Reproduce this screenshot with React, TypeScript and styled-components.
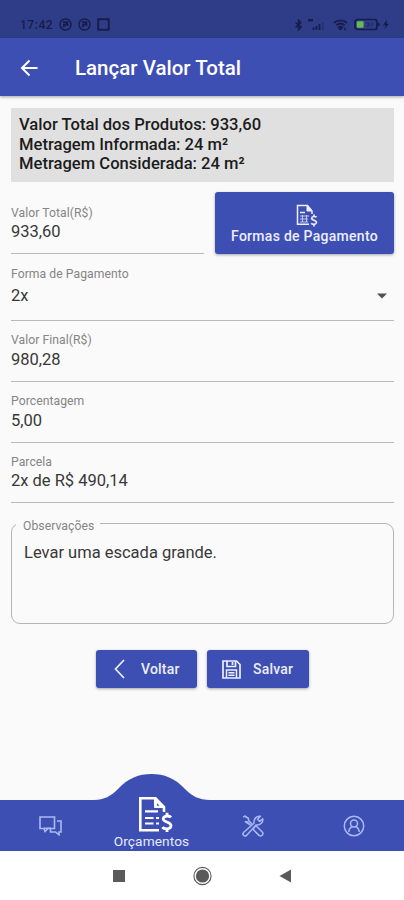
import React from "react";
import styled, { createGlobalStyle } from "styled-components";

const BLUE = "#3e4fb4";

const GlobalStyle = createGlobalStyle`
  * { box-sizing: border-box; }
  body { margin: 0; background: #fafafa; font-family: Roboto, "Liberation Sans", sans-serif; }
`;

const Screen = styled.div`
  width: 404px;
  height: 900px;
  display: flex;
  flex-direction: column;
  background: #fafafa;
  overflow: hidden;
`;

const StatusBar = styled.div`
  flex: none;
  height: 38px;
  padding: 12px 13px 0 20px;
  display: flex;
  align-items: flex-start;
  justify-content: space-between;
  background: #2f3c88;
  color: #161d48;
`;

const StatusGroup = styled.div<{ $gap: number }>`
  display: flex;
  align-items: center;
  height: 25px;
  gap: ${(p) => p.$gap}px;
  svg { display: block; }
`;

const Clock = styled.span`
  width: 33px;
  font-size: 12px;
  font-weight: 500;
  letter-spacing: 0.55px;
  white-space: nowrap;
`;

const AppBar = styled.header`
  flex: none;
  height: 58px;
  padding: 2px 0 0 20px;
  display: flex;
  align-items: center;
  gap: 37px;
  background: ${BLUE};
  color: #fff;
  box-shadow: 0 1px 3px rgba(0, 0, 0, 0.35);
  svg { display: block; }
`;

const Title = styled.h1`
  margin: 0;
  font-size: 20.5px;
  font-weight: 500;
  line-height: 24px;
`;

const Content = styled.main`
  flex: 1;
  padding: 12px 10px 0 11px;
  display: flex;
  flex-direction: column;
`;

const Summary = styled.section`
  height: 74px;
  padding: 7px 8px 0;
  background: #e0e0e0;
  color: #1c1c1c;
  font-size: 16.6px;
  font-weight: 500;
  line-height: 19.5px;
`;

const TopRow = styled.div`
  display: flex;
  justify-content: space-between;
  margin-top: 10px;
`;

const FieldBox = styled.div<{ $height: number; $width?: number; $gap?: number; $top: number }>`
  width: ${(p) => (p.$width ? `${p.$width}px` : "100%")};
  height: ${(p) => p.$height}px;
  padding-top: ${(p) => p.$top}px;
  display: flex;
  flex-direction: column;
  gap: ${(p) => p.$gap ?? 0}px;
  border-bottom: 1px solid #b9b9b9;
`;

const Label = styled.span`
  font-size: 12.2px;
  line-height: 16px;
  color: #858585;
  letter-spacing: 0.05px;
`;

const Value = styled.span`
  display: flex;
  align-items: center;
  justify-content: space-between;
  font-size: 16.5px;
  line-height: 22px;
  color: #383838;
`;

const Caret = styled.svg`
  display: block;
  margin-right: 7px;
`;

const PaymentButton = styled.button`
  width: 179px;
  height: 62px;
  padding: 12px 0 0;
  border: 0;
  border-radius: 3px;
  display: flex;
  flex-direction: column;
  align-items: center;
  background: ${BLUE};
  color: #eceefa;
  font: 500 14px/19px Roboto, sans-serif;
  letter-spacing: 0.28px;
  box-shadow: 0 1px 3px rgba(0, 0, 0, 0.35);
  svg { display: block; margin-left: 5px; }
`;

const Notes = styled.fieldset`
  height: 111px;
  margin: 10px 0 0;
  padding: 8px 12px;
  min-width: 0;
  border: 1px solid #b5b5b5;
  border-radius: 9px;
  color: #383838;
  font-size: 16.5px;
  line-height: 22px;
`;

const Legend = styled.legend`
  margin-left: -8px;
  padding: 5px 6px 0 7px;
  font-size: 12.2px;
  line-height: 16px;
  color: #858585;
  letter-spacing: 0.05px;
`;

const Actions = styled.div`
  display: flex;
  gap: 10px;
  margin: 26px 0 0 85px;
`;

const ActionButton = styled.button<{ $width: number; $gap: number; $pad: number }>`
  width: ${(p) => p.$width}px;
  height: 38px;
  padding: 0 0 0 ${(p) => p.$pad}px;
  border: 0;
  border-radius: 3px;
  display: flex;
  align-items: center;
  gap: ${(p) => p.$gap}px;
  background: ${BLUE};
  color: #eceefa;
  font: 500 14px/18px Roboto, sans-serif;
  letter-spacing: 0.2px;
  box-shadow: 0 1px 3px rgba(0, 0, 0, 0.35);
  svg { display: block; }
`;

const TabBar = styled.nav`
  flex: none;
  height: 51px;
  display: grid;
  grid-template-columns: repeat(4, 1fr);
  grid-template-rows: 51px;
  background: ${BLUE};
  box-shadow: 0 1px 1px rgba(62, 79, 180, 0.4);
`;

const Tab = styled.div`
  display: flex;
  align-items: center;
  justify-content: center;
  color: #aab9f2;
  svg { display: block; }
`;

const ActiveTab = styled.div`
  position: relative;
  display: flex;
  flex-direction: column;
  align-items: center;
  justify-content: flex-end;
  color: #fff;
`;

const Bump = styled.svg`
  position: absolute;
  left: -7px;
  bottom: 50px;
`;

const ActiveIcon = styled.div`
  position: relative;
  flex: none;
  width: 36px;
  height: 37px;
  margin-left: 9px;
  svg { display: block; }
`;

const ActiveLabel = styled.span`
  position: relative;
  flex: none;
  padding-bottom: 1px;
  font-size: 13.7px;
  line-height: 17px;
  color: #e6e9fb;
  letter-spacing: 0.1px;
`;

const SystemBar = styled.footer`
  flex: none;
  height: 49px;
  padding-left: 113px;
  display: flex;
  align-items: center;
  background: #fff;
  svg { display: block; }
`;

const InvoiceIcon = ({ width, height }: { width: number; height: number }) => (
  <svg width={width} height={height} viewBox="0 0 36 37" fill="none" stroke="currentColor" strokeWidth="2.6">
    <path d="M21 34.2H2.3V2.3H17.5L26 11V16" />
    <path d="M16.5 2.5V11.5H26Z" fill="currentColor" strokeWidth="1" />
    <path d="M19 7.3V9.8H21.4Z" fill={BLUE} stroke="none" />
    <path d="M7 15.3H20M7 22H15.5M18 22H21M7 27.5H15.5M18 27.5H21" strokeWidth="2.2" />
    <path d="M33 21.3C31.8 19.8 26 19 25.2 22.5C24.7 26.5 33.2 25.4 33 29.8C32.6 33.7 26 33.5 24.4 31.1M29 16.7V20M29 32.5V36" strokeWidth="2.8" />
  </svg>
);

const CalculatorInvoiceIcon = () => (
  <svg width="22" height="23" viewBox="0 0 22 23" fill="none" stroke="currentColor" strokeWidth="1.5">
    <path d="M13 20.3H1.5V1.5H11.5L16 7V10" />
    <path d="M11 1.5V7H16Z" fill="currentColor" strokeWidth="1" />
    <path d="M4 8.5H9" />
    <path d="M4 12H13M4 15H12M4 18H12M6.5 11V18.5M10.5 11V18.5" strokeWidth="1.1" opacity=".75" />
    <path d="M20.5 13.3C19.7 12.2 16 12 15.7 14.2C15.5 16.6 20.6 15.8 20.5 18.5C20.2 20.9 16.2 20.7 15.2 19.3M18 10.5V12.5M18 20.3V22.5" strokeWidth="1.7" />
  </svg>
);

const SilentIcon = () => (
  <svg width="13" height="13" viewBox="0 0 13 13" fill="none" stroke="currentColor" strokeWidth="1.4">
    <circle cx="6.5" cy="6.5" r="5.5" />
    <path d="M4 4.2H8.5V8M4.2 9L8.5 4.5M4 6.3L6 6.5" strokeWidth="1.7" />
  </svg>
);

type FieldProps = {
  label: string;
  value: string;
  height: number;
  top: number;
  width?: number;
  gap?: number;
  select?: boolean;
};

const Field = ({ label, value, height, top, width, gap, select }: FieldProps) => (
  <FieldBox $height={height} $top={top} $width={width} $gap={gap}>
    <Label>{label}</Label>
    <Value>
      {value}
      {select && (
        <Caret width="10" height="6" viewBox="0 0 10 6">
          <path d="M0 .5H10L5 5.5Z" fill="#505050" />
        </Caret>
      )}
    </Value>
  </FieldBox>
);

export default function App() {
  return (
    <Screen>
      <GlobalStyle />
      <StatusBar>
        <StatusGroup $gap={6}>
          <Clock>17:42</Clock>
          <SilentIcon />
          <SilentIcon />
          <svg width="13" height="13" viewBox="0 0 13 13" fill="none" stroke="currentColor">
            <rect x="1.2" y="1.2" width="10.6" height="10.6" strokeWidth="1.8" />
            <path d="M1 3L3 1M10 1L12 3M1 10L3 12M10 12L12 10" strokeWidth="1.5" />
          </svg>
        </StatusGroup>
        <StatusGroup $gap={6}>
          <svg width="8" height="12" viewBox="0 0 8 12" fill="none" stroke="currentColor" strokeWidth="1.5">
            <path d="M1.5 3.5L7 8.2L4.5 10.8V1.2L7 3.7L1.5 8.5" />
          </svg>
          <svg width="18" height="13" viewBox="0 0 18 13" fill="none" stroke="currentColor" strokeWidth="1.8">
            <path d="M0 2.2H5" strokeWidth="2.4" />
            <path d="M5.5 12V9.5M8.5 12V8M11.5 12V6" />
            <path d="M14.8 12V4" opacity=".35" />
          </svg>
          <svg width="16" height="13" viewBox="0 0 16 13" fill="none" stroke="currentColor" strokeWidth="1.8">
            <path d="M2 5C5.5 1.5 11.5 1.5 15 5M4.5 7.2C7 5 10 5 12.5 7.2M6.7 9.5L8.5 11.2L10.3 9.5C9.3 8.5 7.7 8.5 6.7 9.5Z" />
            <path d="M13 9.5V12.5" strokeWidth="1.2" />
          </svg>
          <svg width="37" height="13" viewBox="0 0 37 13">
            <rect x="1" y="1.5" width="22" height="10" rx="2.5" fill="none" stroke="currentColor" strokeWidth="1.7" />
            <rect x="2.8" y="3.2" width="6.8" height="6.6" rx="1" fill="#64bb51" />
            <path d="M12 5H15V8H12M18 4.5V8.5" fill="none" stroke="currentColor" strokeWidth="1" opacity=".6" />
            <path d="M24.5 5V8" stroke="currentColor" strokeWidth="2" />
            <path d="M33 1.5L29 7.2H31.5L30.5 11L35 5.8H32.5Z" fill="currentColor" />
          </svg>
        </StatusGroup>
      </StatusBar>

      <AppBar>
        <svg width="18" height="18" viewBox="0 0 18 18" fill="none" stroke="currentColor" strokeWidth="2">
          <path d="M17.5 9H2.5M9.5 1.5L2 9L9.5 16.5" />
        </svg>
        <Title>Lançar Valor Total</Title>
      </AppBar>

      <Content>
        <Summary>
          <div>Valor Total dos Produtos: 933,60</div>
          <div>Metragem Informada: 24 m²</div>
          <div>Metragem Considerada: 24 m²</div>
        </Summary>
        <TopRow>
          <Field label="Valor Total(R$)" value="933,60" width={193} height={62} top={13} />
          <PaymentButton>
            <CalculatorInvoiceIcon />
            Formas de Pagamento
          </PaymentButton>
        </TopRow>
        <Field label="Forma de Pagamento" value="2x" height={67} top={12} gap={3} select />
        <Field label="Valor Final(R$)" value="980,28" height={61} top={11} gap={1} />
        <Field label="Porcentagem" value="5,00" height={61} top={11} gap={1} />
        <Field label="Parcela" value="2x de R$ 490,14" height={60} top={11} />
        <Notes>
          <Legend>Observações</Legend>
          Levar uma escada grande.
        </Notes>
        <Actions>
          <ActionButton $width={101} $gap={16} $pad={18}>
            <svg width="11" height="20" viewBox="0 0 11 20" fill="none" stroke="currentColor" strokeWidth="1.7">
              <path d="M10 1L1.5 10L10 19" />
            </svg>
            Voltar
          </ActionButton>
          <ActionButton $width={102} $gap={12} $pad={15}>
            <svg width="19" height="19" viewBox="0 0 19 19" fill="none" stroke="currentColor" strokeWidth="1.7">
              <path d="M1 1H14.5L18 4.5V18H1Z" />
              <path d="M5 1V6.5H13.5V1M10.5 2V5" />
              <path d="M4.5 18V10H14.5V18M6.5 12.7H12.5M6.5 15.3H12.5" strokeWidth="1.5" />
            </svg>
            Salvar
          </ActionButton>
        </Actions>
      </Content>

      <TabBar>
        <Tab>
          <svg width="23" height="20" viewBox="0 0 23 20" fill="none" stroke="currentColor" strokeWidth="1.6">
            <path d="M1 1H15.5V12.5H9L6 15.5L5 12.5H1Z" />
            <path d="M18 5H22V16H20V18.8L16.5 16H11.5V13M5 12.3H12" />
          </svg>
        </Tab>
        <ActiveTab>
          <Bump width="116" height="28" viewBox="0 0 116 28">
            <path d="M0 28V27C10 27 17 23 24 16C34 5 45 1 57.5 1S81 5 91 16C98 23 105 27 116 27V28Z" fill={BLUE} />
          </Bump>
          <ActiveIcon>
            <InvoiceIcon width={36} height={37} />
          </ActiveIcon>
          <ActiveLabel>Orçamentos</ActiveLabel>
        </ActiveTab>
        <Tab>
          <svg width="22" height="22" viewBox="0 0 22 22" fill="none" stroke="currentColor" strokeWidth="1.5" strokeLinejoin="round">
            <path d="M1.2 2.3L2.7 1L6.5 3.5V5.5L10 9M8.6 10.2L5 6.7H3.2Z" />
            <path d="M12.5 12L14 10.8L20.5 17.2C22 19.5 19 22 17 20.4L11.2 14.5Z" />
            <path d="M1.5 17.5L12 8.2C11.3 4 14.5 .5 18.5 1.3L15.5 4.3L17.7 6.5L20.7 3.7C21.5 7.5 18 10.7 14 10L4.5 20.5C2 22 0 19.5 1.5 17.5Z" />
          </svg>
        </Tab>
        <Tab>
          <svg width="22" height="22" viewBox="0 0 22 22" fill="none" stroke="currentColor" strokeWidth="1.5">
            <circle cx="11" cy="11" r="9.7" />
            <circle cx="11" cy="8.5" r="3.5" />
            <path d="M5.8 17C6 13.5 8 12 9.5 11.5M16.2 17C16 13.5 14 12 12.5 11.5" />
          </svg>
        </Tab>
      </TabBar>

      <SystemBar>
        <svg width="180" height="20" viewBox="0 0 180 20" fill="#5a5a5a">
          <rect x="0" y="4" width="12" height="12" />
          <circle cx="89.5" cy="10" r="6.6" />
          <circle cx="89.5" cy="10" r="8.6" fill="none" stroke="#5a5a5a" strokeWidth="1.1" />
          <path d="M178 3.5V16.5L166.5 10Z" />
        </svg>
      </SystemBar>
    </Screen>
  );
}
